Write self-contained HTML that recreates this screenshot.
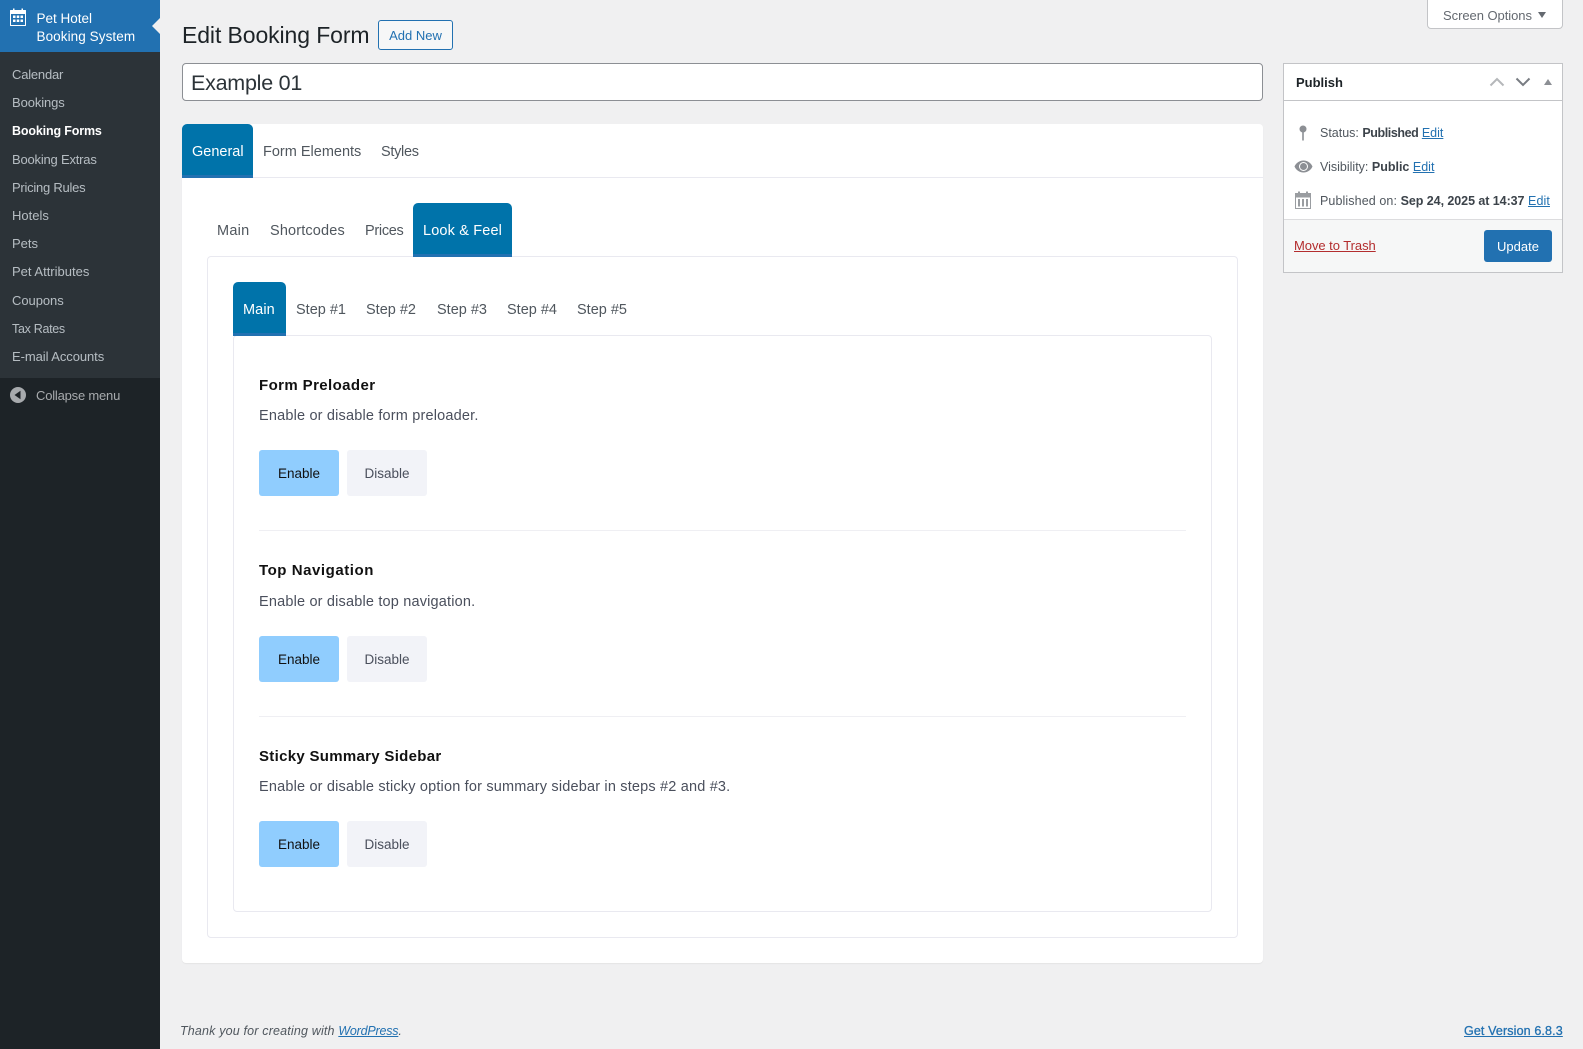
<!DOCTYPE html>
<html lang="en"><head><meta charset="utf-8"><title>Edit Booking Form</title>
<style>
html,body{margin:0;padding:0}
body{width:1583px;height:1049px;position:relative;overflow:hidden;background:#f0f0f1;font-family:"Liberation Sans",Arial,sans-serif;font-size:13px;color:#3c434a}
div,a,span.t,svg.i{position:absolute}
.t{white-space:nowrap;line-height:20px}
a{color:#2271b1;text-decoration:underline}
a.in{position:static}
.m{left:12px;color:rgba(240,246,252,.7);font-size:13px}
.tab{font-size:14.5px;color:#50575e}
.on{background:#0073aa;border-bottom:3px solid #2271b1;border-radius:5px 5px 0 0;box-sizing:border-box}
.h{font-size:15px;font-weight:700;color:#111;left:259px;letter-spacing:.4px}
.d{font-size:14.5px;color:#4a4f5c;left:259px;letter-spacing:.18px}
.en,.di{width:80px;height:46px;border-radius:3px;text-align:center;line-height:47px;font-size:13.5px}
.en{left:259px;background:#90cdfe;color:#111}
.di{left:347px;background:#f2f3f8;color:#4a4f5c}
.hr{left:259px;width:927px;height:1px;background:#efeff3}
</style></head><body>
<div style="left:0;top:0;width:160px;height:1049px;background:#1d2327"></div>
<div style="left:0;top:52px;width:160px;height:326px;background:#2c3338"></div>
<div style="left:0;top:0;width:160px;height:52px;background:#2271b1"></div>
<div style="left:152px;top:18px;width:0;height:0;border-top:8.5px solid transparent;border-bottom:8.5px solid transparent;border-right:8px solid #f0f0f1"></div>
<svg class="i" style="left:10px;top:8px" width="16" height="18" viewBox="0 0 16 18"><path fill="#fff" fill-rule="evenodd" d="M3 .5h1.500V2h7V.5H13V2h2.500A.5.5 0 0 1 16 2.500v15a.5.5 0 0 1-.5.5H.5a.5.5 0 0 1-.5-.5v-15A.5.5 0 0 1 .5 2H3zM1 6v11h14V6zM3 7.500h2.500v2.500H3zM6.750 7.500h2.500v2.500h-2.500zM10.500 7.500H13v2.500h-2.500zM3 11.500h2.500V14H3zM6.750 11.500h2.500V14h-2.500zM10.500 11.500H13V14h-2.500z"/></svg>
<span class="t" style="left:36.500px;top:9px;font-size:13.500px;color:#fff">Pet Hotel</span>
<span class="t" style="left:36.500px;top:27px;font-size:13.500px;color:#fff;letter-spacing:.08px">Booking System</span>
<span class="t m" style="top:64.500px;letter-spacing:-.2px">Calendar</span>
<span class="t m" style="top:92.500px;letter-spacing:-.1px">Bookings</span>
<span class="t m" style="top:120.500px;color:#fff;font-weight:700;font-size:12.500px;letter-spacing:-.15px">Booking Forms</span>
<span class="t m" style="top:150px;letter-spacing:-.2px">Booking Extras</span>
<span class="t m" style="top:178px;letter-spacing:-.25px">Pricing Rules</span>
<span class="t m" style="top:205.500px">Hotels</span>
<span class="t m" style="top:233.500px">Pets</span>
<span class="t m" style="top:261.500px">Pet Attributes</span>
<span class="t m" style="top:291px;letter-spacing:-.05px">Coupons</span>
<span class="t m" style="top:318.500px;font-size:12.500px;letter-spacing:-.3px">Tax Rates</span>
<span class="t m" style="top:346.500px;letter-spacing:-.07px">E-mail Accounts</span>
<svg class="i" style="left:10px;top:387px" width="16" height="16" viewBox="0 0 16 16"><circle cx="8" cy="8" r="8" fill="#a7aaad"/><path d="M10.500 3.800v8.400L4.500 8z" fill="#1d2327"/></svg>
<span class="t" style="left:36px;top:386px;color:#a7aaad;letter-spacing:-.2px">Collapse menu</span>

<span class="t" style="left:182px;top:20px;font-size:23px;line-height:30px;color:#1d2327;letter-spacing:-.1px">Edit Booking Form</span>
<div style="left:378px;top:20px;width:75px;height:30px;box-sizing:border-box;border:1px solid #2271b1;border-radius:3px;background:#f6f7f7;color:#2271b1;text-align:center;line-height:29px;font-size:13px">Add New</div>
<div style="left:182px;top:63px;width:1081px;height:38px;box-sizing:border-box;border:1px solid #8c8f94;border-radius:4px;background:#fff;font-size:21.500px;line-height:38px;padding-left:8px;color:#2c3338;letter-spacing:-.25px">Example 01</div>

<div style="left:182px;top:124px;width:1081px;height:839px;background:#fff;border-radius:4px;box-shadow:0 1px 1px rgba(0,0,0,.05)"></div>
<div style="left:182px;top:177px;width:1081px;height:1px;background:#e9e9f0"></div>
<div class="on" style="left:182px;top:124px;width:71px;height:54px"></div>
<span class="t tab" style="left:192px;top:142px;color:#fff">General</span>
<span class="t tab" style="left:263px;top:142px">Form Elements</span>
<span class="t tab" style="left:381px;top:142px;letter-spacing:-.3px">Styles</span>

<div style="left:207px;top:256px;width:1031px;height:682px;box-sizing:border-box;border:1px solid #e9e9f0;border-radius:4px;background:#fff"></div>
<span class="t tab" style="left:217px;top:221px;letter-spacing:.25px">Main</span>
<span class="t tab" style="left:270px;top:221px;letter-spacing:.15px">Shortcodes</span>
<span class="t tab" style="left:365px;top:221px;letter-spacing:-.3px">Prices</span>
<div class="on" style="left:413px;top:203px;width:99px;height:54px"></div>
<span class="t tab" style="left:423px;top:221px;color:#fff;letter-spacing:.15px">Look &amp; Feel</span>

<div style="left:233px;top:335px;width:979px;height:577px;box-sizing:border-box;border:1px solid #e9e9f0;border-radius:4px;background:#fff"></div>
<div class="on" style="left:233px;top:282px;width:53px;height:54px"></div>
<span class="t tab" style="left:243px;top:300px;color:#fff;letter-spacing:.1px">Main</span>
<span class="t tab" style="left:296px;top:300px">Step #1</span>
<span class="t tab" style="left:366px;top:300px">Step #2</span>
<span class="t tab" style="left:437px;top:300px">Step #3</span>
<span class="t tab" style="left:507px;top:300px">Step #4</span>
<span class="t tab" style="left:577px;top:300px">Step #5</span>

<span class="t h" style="top:376px">Form Preloader</span>
<span class="t d" style="top:406px">Enable or disable form preloader.</span>
<div class="en" style="top:450px">Enable</div><div class="di" style="top:450px">Disable</div>
<div class="hr" style="top:530px"></div>

<span class="t h" style="top:561px;letter-spacing:.55px">Top Navigation</span>
<span class="t d" style="top:592px">Enable or disable top navigation.</span>
<div class="en" style="top:636px">Enable</div><div class="di" style="top:636px">Disable</div>
<div class="hr" style="top:716px"></div>

<span class="t h" style="top:747px;letter-spacing:.3px">Sticky Summary Sidebar</span>
<span class="t d" style="top:777px">Enable or disable sticky option for summary sidebar in steps #2 and #3.</span>
<div class="en" style="top:821px">Enable</div><div class="di" style="top:821px">Disable</div>

<div style="left:1427px;top:-2px;width:136px;height:31px;box-sizing:border-box;border:1px solid #c3c4c7;border-radius:0 0 4px 4px;background:#fff"></div>
<span class="t" style="left:1443px;top:6px;color:#646970;letter-spacing:-.05px">Screen Options</span>
<div style="left:1538px;top:12px;width:0;height:0;border-left:4.500px solid transparent;border-right:4.500px solid transparent;border-top:6px solid #646970"></div>

<div style="left:1283px;top:63px;width:280px;height:210px;box-sizing:border-box;border:1px solid #c3c4c7;background:#fff"></div>
<div style="left:1284px;top:100px;width:278px;height:1px;background:#c3c4c7"></div>
<div style="left:1284px;top:219px;width:278px;height:53px;background:#f6f7f7;border-top:1px solid #dcdcde;box-sizing:border-box"></div>
<span class="t" style="left:1296px;top:73px;font-weight:700;font-size:13px;color:#1d2327">Publish</span>
<svg class="i" style="left:1489px;top:76px" width="16" height="12" viewBox="0 0 16 12"><path d="M1.500 9.500 8 3l6.500 6.500" fill="none" stroke="#b5b7ba" stroke-width="2"/></svg>
<svg class="i" style="left:1515px;top:76px" width="16" height="12" viewBox="0 0 16 12"><path d="M1.500 2.500 8 9l6.500-6.500" fill="none" stroke="#787c82" stroke-width="2"/></svg>
<div style="left:1544px;top:79px;width:0;height:0;border-left:4px solid transparent;border-right:4px solid transparent;border-bottom:6px solid #8c8f94"></div>
<svg class="i" style="left:1299px;top:125px" width="8" height="16" viewBox="0 0 8 16"><circle cx="4" cy="4" r="3.500" fill="#8c8f94"/><path d="M3.200 6h1.600v9.500H3.200z" fill="#8c8f94"/></svg>
<svg class="i" style="left:1294px;top:160px" width="19" height="13" viewBox="0 0 19 13"><path fill="#8c8f94" fill-rule="evenodd" d="M9.500.5C5 .5 1.800 3.500.500 6.500c1.300 3 4.500 6 9 6s7.700-3 9-6c-1.300-3-4.500-6-9-6zm0 1.500a4.500 4.500 0 1 1 0 9 4.500 4.500 0 0 1 0-9z"/><circle cx="9.500" cy="6.500" r="3.500" fill="#8c8f94"/></svg>
<svg class="i" style="left:1295px;top:191px" width="16" height="18" viewBox="0 0 16 18"><path fill="#9a9da1" fill-rule="evenodd" d="M3 .5h2V2h6V.5h2V2h3v16H0V2h3zM1 6.500V17h14V6.500zM3 8h2v7.500H3zM7 8h2v7.500H7zM11 8h2v7.500h-2z"/></svg>
<span class="t" style="left:1320px;top:122.500px;font-size:12.500px;color:#50575e">Status: <b style="color:#3c434a;letter-spacing:-.42px">Published</b> <a class="in" href="#">Edit</a></span>
<span class="t" style="left:1320px;top:156.500px;font-size:12.500px;color:#50575e">Visibility: <b style="color:#3c434a">Public</b> <a class="in" href="#">Edit</a></span>
<span class="t" style="left:1320px;top:190.500px;font-size:12.500px;color:#50575e;letter-spacing:.1px">Published on: <b style="color:#3c434a;letter-spacing:-.06px">Sep 24, 2025 at 14:37</b> <a class="in" href="#">Edit</a></span>
<a class="t" href="#" style="left:1294px;top:236px;color:#b32d2e;letter-spacing:-.05px">Move to Trash</a>
<div style="left:1484px;top:230px;width:68px;height:32px;border-radius:3px;background:#2271b1;color:#fff;text-align:center;line-height:33px;font-size:13px">Update</div>

<span class="t" style="left:180px;top:1021px;font-style:italic;color:#50575e;font-size:12.500px;letter-spacing:.17px">Thank you for creating with <a class="in" href="#" style="letter-spacing:-.2px">WordPress</a>.</span>
<a class="t" href="#" style="left:1464px;top:1021px;font-size:12.500px;letter-spacing:.13px;-webkit-text-stroke:.3px #2271b1">Get Version 6.8.3</a>
</body></html>
